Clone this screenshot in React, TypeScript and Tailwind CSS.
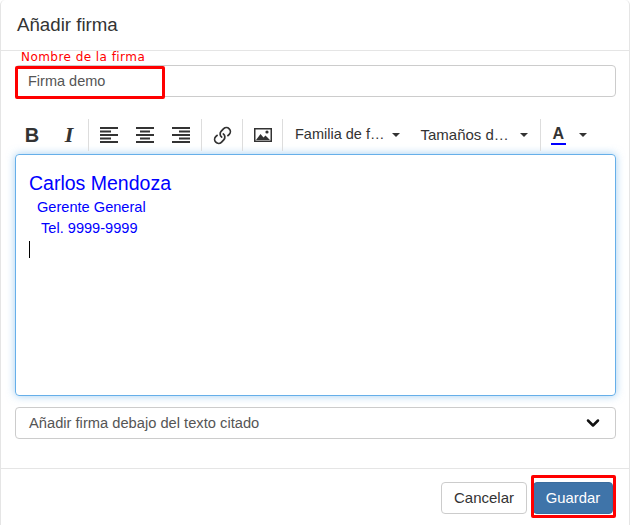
import { ChevronDown, Link } from "lucide-react";

const Separator = () => <div className="w-px h-[32px] bg-[#ddd] mx-[5px]" />;

const AlignIcon = ({ mode }: { mode: "left" | "center" | "right" }) => {
    const short = mode === "left" ? "M0 4.5h11M0 11.5h11" : mode === "center" ? "M4 4.5h10M4 11.5h10" : "M7 4.5h11M7 11.5h11";
    return (
        <svg width="18" height="16" viewBox="0 0 18 16" stroke="#333" strokeWidth="2" fill="none">
            <path d="M0 1h18M0 8h18M0 15h18" />
            <path d={short} />
        </svg>
    );
};

const Caret = () => (
    <span className="inline-block w-0 h-0 border-x-[4px] border-x-transparent border-t-[4px] border-t-[#333]" />
);

const ToolButton = ({ children, className }: { children: React.ReactNode; className: string }) => (
    <div className={`flex items-center justify-center h-[32px] ${className}`}>{children}</div>
);

export default function App() {
    return (
        <div className="relative w-[630px] h-[525px] overflow-hidden bg-white border-x border-[#e5e5e5] rounded-t-[5px] font-['Liberation_Sans',Arial,sans-serif] text-[14.5px] text-[#333]">
            <header className="h-[51px] border-b border-[#e5e5e5] pl-[16px] pt-[12px]">
                <h4 className="text-[18.7px] leading-[25px]">Añadir firma</h4>
            </header>

            <div className="pl-[14px] pr-[13px]">
                <div className="relative pt-[14px]">
                    <label className="absolute left-[6px] top-[-2px] font-['DejaVu_Sans',sans-serif] text-[12px] leading-[17px] tracking-[0.45px] text-[#f00]">
                        Nombre de la firma
                    </label>
                    <div className="h-[32px] border border-[#ccc] rounded-[4px] pl-[12px] pt-[1px] flex items-center text-[#555]">
                        Firma demo
                    </div>
                    <div className="absolute left-0 top-[15px] w-[150px] h-[33px] border-[3px] border-[#f00] rounded-[2px]" />
                </div>

                <div className="flex items-center h-[32px] mt-[22px] text-[#333]">
                    <ToolButton className="w-[34px]">
                        <span className="text-[20px] font-bold leading-none">B</span>
                    </ToolButton>
                    <ToolButton className="w-[34px] pl-[6px]">
                        <span className="text-[22px] font-bold italic font-['Liberation_Serif',serif] leading-none">I</span>
                    </ToolButton>
                    <Separator />
                    <div className="flex items-center gap-[18px] px-[6px]">
                        <AlignIcon mode="left" />
                        <AlignIcon mode="center" />
                        <AlignIcon mode="right" />
                    </div>
                    <Separator />
                    <ToolButton className="w-[30px]">
                        <Link size={19} strokeWidth={2.2} className="-scale-x-100 rotate-90" />
                    </ToolButton>
                    <Separator />
                    <ToolButton className="w-[29px]">
                        <svg width="18" height="14" viewBox="0 0 18 14">
                            <rect x="0.75" y="0.75" width="16.5" height="12.5" fill="#fff" stroke="#333" strokeWidth="1.5" />
                            <path d="M2 12l4.5-6 3 3.5 2-2L16 12z" fill="#333" />
                            <circle cx="13" cy="4" r="1.6" fill="#333" />
                        </svg>
                    </ToolButton>
                    <Separator />
                    <div className="flex items-center gap-[8px] pl-[7px]">
                        <span className="text-[14.5px]">Familia de f…</span>
                        <Caret />
                    </div>
                    <div className="flex items-center gap-[11px] pl-[20px]">
                        <span className="text-[15px]">Tamaños d…</span>
                        <Caret />
                    </div>
                    <div className="ml-[7px]">
                        <Separator />
                    </div>
                    <div className="flex items-center gap-[13px] pl-[5px]">
                        <span className="font-bold text-[16px] leading-[18px] border-b-2 border-[#00f] w-[15px] text-center">A</span>
                        <Caret />
                    </div>
                </div>

                <div className="h-[242px] mt-[3px] border border-[#66afe9] rounded-[4px] shadow-[0_0_8px_rgba(102,175,233,0.6)] pt-[17px] pl-[13px] text-[#00f]">
                    <div className="text-[19.5px] leading-[22px]">Carlos Mendoza</div>
                    <div className="text-[14.6px] leading-[20px] pl-[8px] mt-[3px]">Gerente General</div>
                    <div className="text-[14.6px] leading-[20px] pl-[12px] mt-[1px]">Tel. 9999-9999</div>
                    <div className="w-px h-[17px] bg-black mt-[3px]" />
                </div>

                <div className="h-[32px] mt-[11px] border border-[#ccc] rounded-[4px] pl-[13px] pr-[12px] flex items-center justify-between text-[#555]">
                    <span className="text-[14.7px]">Añadir firma debajo del texto citado</span>
                    <ChevronDown size={20} strokeWidth={3} className="text-[#111]" />
                </div>
            </div>

            <footer className="mt-[29px] border-t border-[#e5e5e5] h-[57px] pt-[13px] pr-[16px] flex justify-end gap-[6px]">
                <button className="w-[86px] h-[32px] border border-[#ccc] rounded-[4px] bg-white text-[#333] text-[15px]">Cancelar</button>
                <div className="relative">
                    <button className="w-[80px] h-[32px] border border-[#3a6c9e] rounded-[4px] bg-[#3f74a9] text-white text-[14.8px]">Guardar</button>
                    <div className="absolute left-[-2px] top-[-7px] w-[85px] h-[43px] border-[3px] border-[#f00] rounded-[2px]" />
                </div>
            </footer>
        </div>
    );
}
